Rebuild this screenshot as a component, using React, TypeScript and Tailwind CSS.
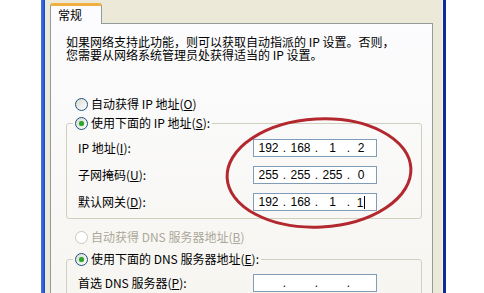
import type { ReactNode } from 'react';

function Radio({ checked = false, disabled = false }: { checked?: boolean; disabled?: boolean }) {
  return (
    <span
      className={
        disabled
          ? 'flex h-[13px] w-[13px] shrink-0 items-center justify-center rounded-full border border-[#cac8bb] bg-white'
          : 'flex h-[13px] w-[13px] shrink-0 items-center justify-center rounded-full border border-[#1c5180] bg-linear-to-br from-[#dcdad2] to-white'
      }
    >
      {checked && <span className="h-[5px] w-[5px] rounded-full bg-[#2aa52a] shadow-[0_0_1px_#5fd05f]" />}
    </span>
  );
}

function RadioRow({ children, checked, disabled }: { children: ReactNode; checked?: boolean; disabled?: boolean }) {
  return (
    <div className={`flex h-[14px] items-center gap-[3px] ${disabled ? 'text-[#aca899]' : 'text-black'}`}>
      <Radio checked={checked} disabled={disabled} />
      <span className="leading-[14px]">{children}</span>
    </div>
  );
}

function IpInput({ parts, caret = false }: { parts: string[]; caret?: boolean }) {
  return (
    <div className="flex h-[18px] w-[124px] items-center border border-[#7f9db9] bg-white pl-[1px] font-['Liberation_Sans',sans-serif] text-[12px] leading-[16px] text-black">
      {parts.map((p, i) => (
        <div key={i} className="flex items-center">
          <span className={i === 3 ? 'w-[20px] text-center' : 'w-[27px] text-center'}>
            {p}
            {caret && i === 3 && <span className="ml-px inline-block h-[13px] w-px translate-y-[2px] bg-black" />}
          </span>
          {i < 3 && <span className="w-[5px] text-center">.</span>}
        </div>
      ))}
    </div>
  );
}

function FieldRow({ label, parts, caret }: { label: ReactNode; parts: string[]; caret?: boolean }) {
  return (
    <div className="flex h-[18px] items-center">
      <span className="w-[175px] leading-[14px]">{label}</span>
      <IpInput parts={parts} caret={caret} />
    </div>
  );
}

export default function App() {
  return (
    <div className="relative flex h-[293px] w-[484px] overflow-hidden bg-white font-['Noto_Sans_CJK_SC',sans-serif] text-[12px] text-black">
      <div className="w-[41px] bg-white" />
      <div className="w-[4px] bg-linear-to-r from-[#4a78e0] to-[#1846c8]" />

      <div className="flex w-[397px] flex-col bg-[#ece9d8] pl-[5px] pr-[9px]">
        <div className="flex h-[23px] items-end pt-[3px]">
          <div className="relative z-10 -mb-px flex h-[21px] w-[52px] items-center rounded-t-[3px] border-x border-t-[3px] border-x-[#919b9c] border-t-[#f0b040] bg-[#fcfcfe] pl-[7px] leading-[14px]">
            常规
          </div>
        </div>

        <div className="flex-1 border border-[#919b9c] bg-linear-to-b from-[#fcfcfe] to-[#f6f5f0] pl-[15px] pr-[10px] pt-[11px]">
          <p className="leading-[13px]">
            如果网络支持此功能，则可以获取自动指派的 IP 设置。否则，
            <br />
            您需要从网络系统管理员处获得适当的 IP 设置。
          </p>

          <div className="mt-[36px] pl-[9px]">
            <RadioRow>
              自动获得 IP 地址(<u>O</u>)
            </RadioRow>
          </div>

          <fieldset className="mt-[5px] rounded-[3px] border border-[#d0d0bf] px-[6px] pb-[7px]">
            <legend className="px-[2px]">
              <RadioRow checked>
                使用下面的 IP 地址(<u>S</u>):
              </RadioRow>
            </legend>
            <div className="mt-[9px] flex flex-col gap-[9px] pl-[5px]">
              <FieldRow label={<>IP 地址(<u>I</u>):</>} parts={['192', '168', '1', '2']} />
              <FieldRow label={<>子网掩码(<u>U</u>):</>} parts={['255', '255', '255', '0']} />
              <FieldRow label={<>默认网关(<u>D</u>):</>} parts={['192', '168', '1', '1']} caret />
            </div>
          </fieldset>

          <div className="mt-[11px] pl-[9px]">
            <RadioRow disabled>
              自动获得 DNS 服务器地址(<u>B</u>)
            </RadioRow>
          </div>

          <fieldset className="mt-[8px] h-[60px] rounded-[3px] border border-[#d0d0bf] px-[6px]">
            <legend className="px-[2px]">
              <RadioRow checked>
                使用下面的 DNS 服务器地址(<u>E</u>):
              </RadioRow>
            </legend>
            <div className="mt-[8px] flex flex-col pl-[5px]">
              <FieldRow label={<>首选 DNS 服务器(<u>P</u>):</>} parts={['', '', '', '']} />
            </div>
          </fieldset>
        </div>
      </div>

      <div className="flex w-[4px]">
        <div className="w-px bg-[#f8f6ea]" />
        <div className="flex-1 bg-[#0b2b9e]" />
      </div>
      <div className="flex-1 bg-white" />

      <svg className="pointer-events-none absolute left-0 top-0" width="484" height="293" viewBox="0 0 484 293">
        <ellipse
          cx="319"
          cy="173"
          rx="92"
          ry="54"
          fill="none"
          stroke="#b3282f"
          strokeWidth="3"
          transform="rotate(-3 319 173)"
        />
      </svg>
    </div>
  );
}
